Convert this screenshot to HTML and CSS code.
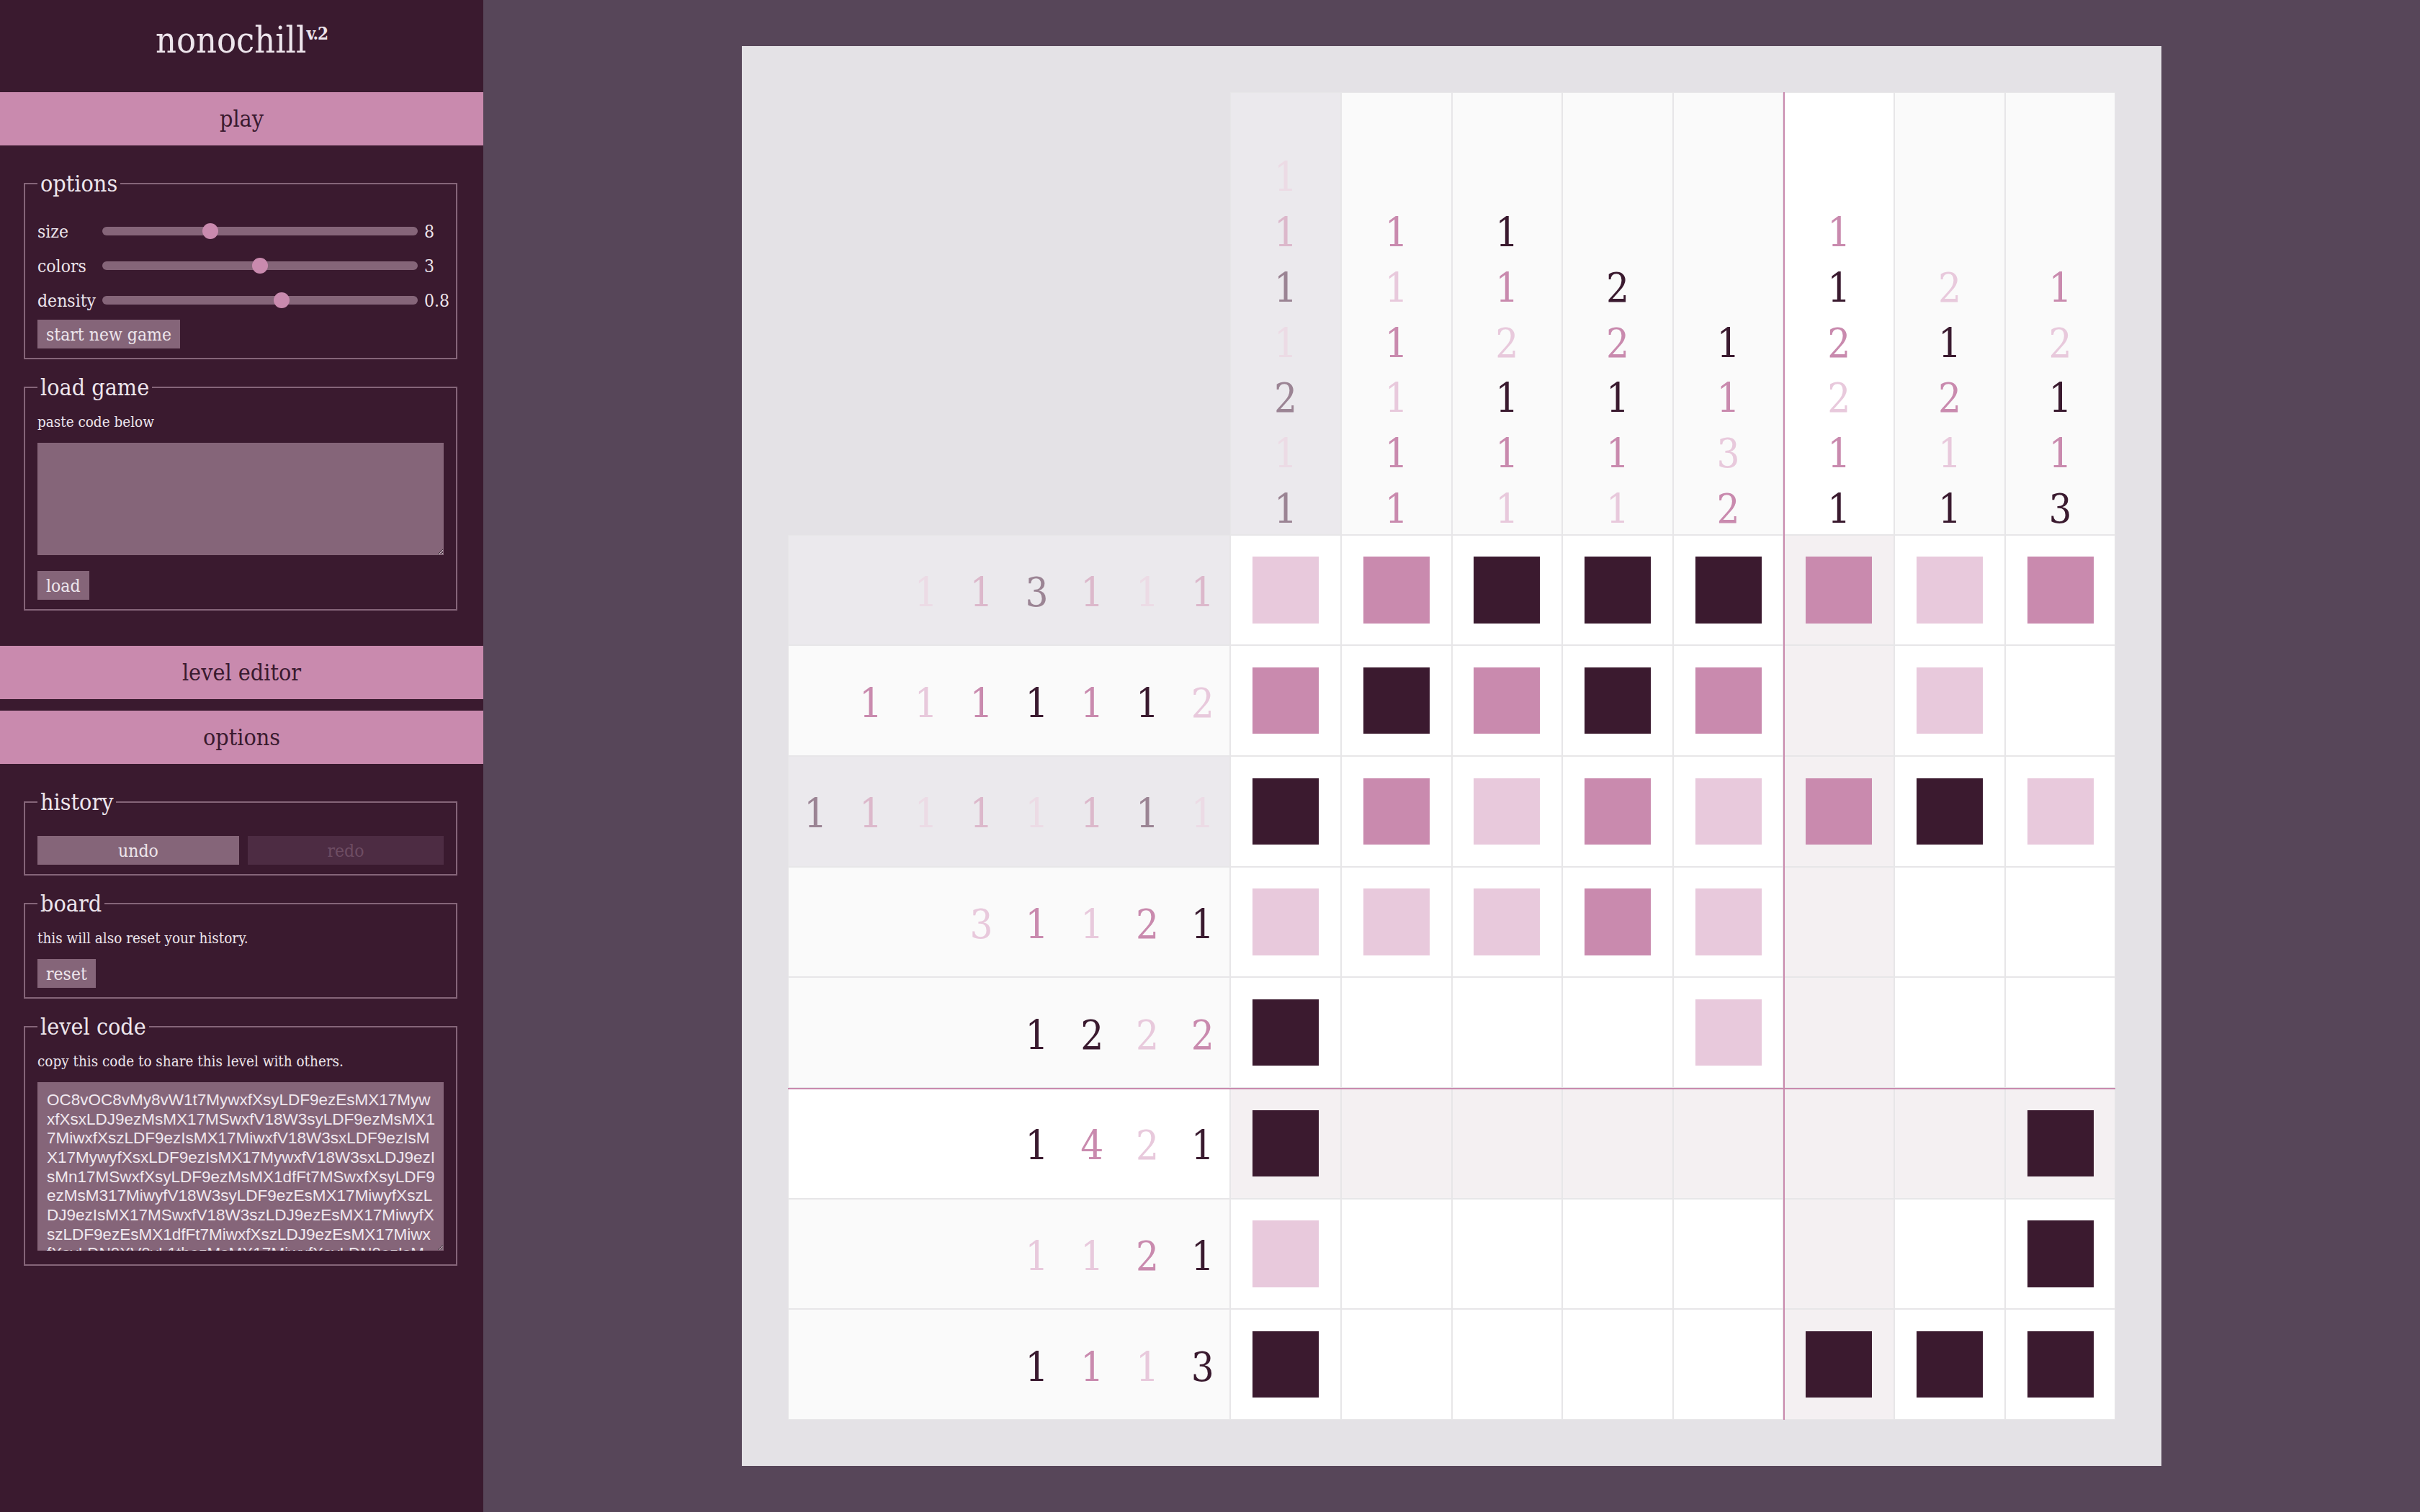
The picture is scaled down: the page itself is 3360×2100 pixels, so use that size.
FILE: index.html
```html
<!DOCTYPE html>
<html lang="en">
<head>
<meta charset="UTF-8" />
<meta name="viewport" content="width=device-width, initial-scale=1" />
<title>nonochill v.2</title>
<link rel="stylesheet" href="styles.css">
</head>
<body>

  <aside class="sidebar">
    <div class="logo">nonochill<sup>v.2</sup></div>

    <div class="tab">play</div>
    <div class="tab-body">
      <fieldset class="group">
        <legend>options</legend>
        <div class="sliders">
          <div class="slider-row">
            <label for="sizeSlider">size</label>
            <input type="range" id="sizeSlider" min="4" max="16" step="1" value="8" />
            <span class="value">8</span>
          </div>
          <div class="slider-row">
            <label for="colorsSlider">colors</label>
            <input type="range" id="colorsSlider" min="1" max="5" step="1" value="3" />
            <span class="value">3</span>
          </div>
          <div class="slider-row">
            <label for="densitySlider">density</label>
            <input type="range" id="densitySlider" min="0.4" max="1.1" step="0.05" value="0.8" />
            <span class="value">0.8</span>
          </div>
        </div>
        <button class="btn new-game">start new game</button>
      </fieldset>

      <fieldset class="group">
        <legend>load game</legend>
        <p class="note">paste code below</p>
        <textarea class="code-box load-box"></textarea>
        <button class="btn load-btn">load</button>
      </fieldset>
    </div>

    <div class="tab">level editor</div>
    <div class="tab">options</div>
    <div class="tab-body">
      <fieldset class="group">
        <legend>history</legend>
        <div class="history-btns">
          <button class="btn">undo</button>
          <button class="btn" disabled>redo</button>
        </div>
      </fieldset>

      <fieldset class="group">
        <legend>board</legend>
        <p class="note">this will also reset your history.</p>
        <button class="btn reset-btn">reset</button>
      </fieldset>

      <fieldset class="group">
        <legend>level code</legend>
        <p class="note">copy this code to share this level with others.</p>
        <textarea class="code-box level-box" wrap="off" readonly>OC8vOC8vMy8vW1t7MywxfXsyLDF9ezEsMX17Myw
xfXsxLDJ9ezMsMX17MSwxfV18W3syLDF9ezMsMX1
7MiwxfXszLDF9ezIsMX17MiwxfV18W3sxLDF9ezIsM
X17MywyfXsxLDF9ezIsMX17MywxfV18W3sxLDJ9ezI
sMn17MSwxfXsyLDF9ezMsMX1dfFt7MSwxfXsyLDF9
ezMsM317MiwyfV18W3syLDF9ezEsMX17MiwyfXszL
DJ9ezIsMX17MSwxfV18W3szLDJ9ezEsMX17MiwyfX
szLDF9ezEsMX1dfFt7MiwxfXszLDJ9ezEsMX17Miwx
fXsyLDN9XV0vL1thezMsMX17MiwxfXsyLDN9ezIsM
X17MiwxfV18W3sxLDF9ezMsMX1dXQ==</textarea>
      </fieldset>
    </div>
  </aside>

  <main class="main">
    <div class="panel">
      <div class="board" id="board"></div>
    </div>
  </main>

<script>
  // d = dark, m = mid, l = light
  const COL_CLUES = [
    "1l 1m 1d 1l 2d 1l 1d",
    "1m 1l 1m 1l 1m 1m",
    "1d 1m 2l 1d 1m 1l",
    "2d 2m 1d 1m 1l",
    "1d 1m 3l 2m",
    "1m 1d 2m 2l 1m 1d",
    "2l 1d 2m 1l 1d",
    "1m 2l 1d 1m 3d"
  ];
  const ROW_CLUES = [
    "1l 1m 3d 1m 1l 1m",
    "1m 1l 1m 1d 1m 1d 2l",
    "1d 1m 1l 1m 1l 1m 1d 1l",
    "3l 1m 1l 2m 1d",
    "1d 2d 2l 2m",
    "1d 4m 2l 1d",
    "1l 1l 2m 1d",
    "1d 1m 1l 3d"
  ];
  const GRID = [
    "lmdddmlm",
    "mdmdm.l.",
    "dmlmlmdl",
    "lllml...",
    "d...l...",
    "d......d",
    "l......d",
    "d....ddd"
  ];
  const DONE_COLS = [0];
  const DONE_ROWS = [0, 2];
  const HOVER = { row: 5, col: 5 };
  const SPLIT = 5;
  const COLOR = { d: 'dark', m: 'mid', l: 'light' };

  const board = document.getElementById('board');

  function clueEl(cls, text) {
    const el = document.createElement('div');
    el.className = cls;
    text.split(' ').forEach(part => {
      const span = document.createElement('span');
      span.className = COLOR[part.slice(-1)];
      span.textContent = part.slice(0, -1);
      el.appendChild(span);
    });
    return el;
  }

  const corner = document.createElement('div');
  corner.className = 'corner';
  board.appendChild(corner);

  COL_CLUES.forEach((clue, i) => {
    const el = clueEl('col-clue', clue);
    if (DONE_COLS.includes(i)) el.classList.add('done');
    if (i === HOVER.col) el.classList.add('hl');
    if (i === SPLIT) el.classList.add('split-col');
    board.appendChild(el);
  });

  ROW_CLUES.forEach((clue, r) => {
    const el = clueEl('row-clue', clue);
    if (DONE_ROWS.includes(r)) el.classList.add('done');
    if (r === HOVER.row) el.classList.add('hl');
    if (r === SPLIT) el.classList.add('split-row');
    board.appendChild(el);

    GRID[r].split('').forEach((v, c) => {
      const cell = document.createElement('div');
      cell.className = 'cell';
      if (r === HOVER.row || c === HOVER.col) cell.classList.add('hl');
      if (c === SPLIT && r === SPLIT) cell.classList.add('split-both');
      else if (c === SPLIT) cell.classList.add('split-col');
      else if (r === SPLIT) cell.classList.add('split-row');
      if (v !== '.') {
        const fill = document.createElement('i');
        fill.className = COLOR[v];
        cell.appendChild(fill);
      }
      board.appendChild(cell);
    });
  });
</script>

</body>
</html>
```

FILE: styles.css
```css
* {
  box-sizing: border-box;
}
body {
  margin: 0;
  display: flex;
  height: 100vh;
  overflow: hidden;
  font-family: "DejaVu Serif Condensed", "DejaVu Serif", serif;
  background: #574659;
}

/* sidebar */
.sidebar {
  flex: none;
  width: 671px;
  background: #3a1a2f;
  color: #ede5ec;
}
.logo {
  height: 128px;
  padding-top: 28px;
  line-height: 56px;
  font-size: 50px;
  text-align: center;
}
.logo sup {
  font-size: 24px;
  font-weight: 700;
  line-height: 0;
  letter-spacing: -1px;
}
.tab {
  height: 74px;
  line-height: 74px;
  background: #c98aae;
  color: #3a1a2f;
  font-size: 32px;
  text-align: center;
}
.tab + .tab {
  margin-top: 16px;
}
.tab-body {
  padding: 34px 36px 49px 33px;
}
.group {
  margin: 0;
  min-width: 0;
  border: 2px solid #856579;
  padding: 15px 17px 13px;
}
.group + .group {
  margin-top: 20px;
}
.group legend {
  font-size: 32px;
  line-height: 38px;
  padding: 0 4px;
}
.sliders {
  margin-top: 8px;
}
.slider-row {
  display: grid;
  grid-template-columns: 90px 438px auto;
  align-items: center;
  height: 48px;
  font-size: 24.5px;
}
.slider-row .value {
  padding-left: 9px;
}
input[type="range"] {
  -webkit-appearance: none;
  appearance: none;
  width: 438px;
  height: 12px;
  margin: 0;
  border-radius: 6px;
  background: #856579;
  outline: none;
}
input[type="range"]::-webkit-slider-thumb {
  -webkit-appearance: none;
  appearance: none;
  width: 22px;
  height: 22px;
  border: none;
  border-radius: 50%;
  background: #c98aae;
}
.btn {
  height: 40px;
  padding: 0 12px;
  border: none;
  border-radius: 0;
  background: #856579;
  color: #ede5ec;
  font-family: inherit;
  font-size: 24.5px;
}
.btn:disabled {
  background: #4d2c43;
  color: #6e4d63;
}
.new-game {
  margin-top: 3px;
}
.note {
  margin: 0;
  font-size: 20.5px;
  line-height: 28px;
}
.code-box {
  display: block;
  width: 100%;
  margin-top: 15px;
  border: none;
  border-radius: 0;
  outline: none;
  padding: 12px 13px;
  background: #856579;
  color: #f0e8ef;
  font-family: "Liberation Sans", Arial, sans-serif;
  font-size: 22.5px;
  line-height: 26.67px;
  overflow: hidden;
  resize: both;
}
.load-box {
  height: 156px;
}
.load-btn {
  margin-top: 22px;
}
.level-box {
  height: 234px;
  margin-bottom: 6px;
}
.history-btns {
  display: grid;
  grid-template-columns: 280px 1fr;
  gap: 12px;
  margin-top: 13px;
}
.reset-btn {
  margin-top: 15px;
}

/* board */
.main {
  flex: 1;
  display: flex;
  align-items: center;
  justify-content: center;
}
.panel {
  padding: 64px;
  background: #e4e2e6;
}
.board {
  display: grid;
  grid-template-columns: repeat(12, 153.67px);
  grid-template-rows: repeat(12, 153.67px);
  font-size: 56px;
}
.corner {
  grid-column: span 4;
  grid-row: span 4;
}
.col-clue,
.row-clue,
.cell {
  box-shadow: inset 0 0 0 1px #e7e6e8;
}
.col-clue {
  grid-row: span 4;
  display: flex;
  flex-direction: column;
  justify-content: flex-end;
  background: #fafafa;
}
.col-clue span {
  height: 76.8px;
  padding-top: 3px;
  line-height: 76.8px;
  text-align: center;
}
.row-clue {
  grid-column: span 4;
  display: flex;
  justify-content: flex-end;
  align-items: center;
  padding-top: 6px;
  background: #fafafa;
}
.row-clue span {
  width: 76.8px;
  text-align: center;
}
.col-clue.done,
.row-clue.done {
  background: #ebe9ed;
}
.col-clue.hl,
.row-clue.hl {
  background: #fff;
}
.cell {
  display: flex;
  align-items: center;
  justify-content: center;
  background: #fff;
}
.cell.hl {
  background: #f4f0f2;
}
.cell i {
  width: 60%;
  height: 60%;
}
.split-col {
  box-shadow: inset 2px 0 0 #c98aae, inset 0 0 0 1px #e7e6e8;
}
.split-row {
  box-shadow: inset 0 2px 0 #c98aae, inset 0 0 0 1px #e7e6e8;
}
.split-both {
  box-shadow: inset 2px 0 0 #c98aae, inset 0 2px 0 #c98aae, inset 0 0 0 1px #e7e6e8;
}

/* palette */
span.dark { color: #3a1a2f; }
span.mid { color: #c98aae; }
span.light { color: #e8c9dc; }
.done span.dark { color: #9b8494; }
.done span.mid { color: #dcb8cb; }
.done span.light { color: #ecdbe5; }
i.dark { background: #3b1a2f; }
i.mid { background: #c98aae; }
i.light { background: #e8c9dc; }
```
